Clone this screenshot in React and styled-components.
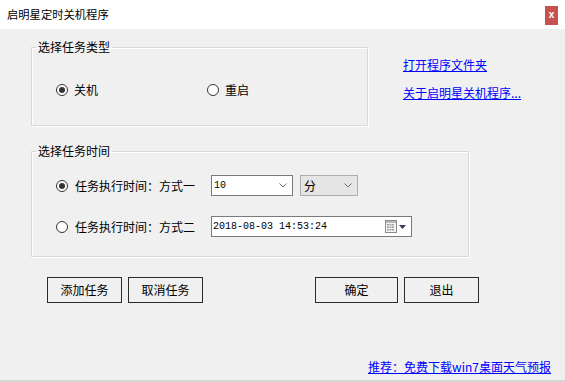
import styled, { createGlobalStyle } from "styled-components";

const GlobalStyle = createGlobalStyle`
  html, body {
    margin: 0;
    padding: 0;
    background: #f0f0f0;
  }
  body {
    font-family: "Noto Sans CJK SC", "Noto Sans", sans-serif;
    font-size: 12px;
    color: #000;
  }
`;

const Window = styled.div`
  width: 565px;
  height: 382px;
  display: flex;
  flex-direction: column;
  background: #f0f0f0;
  overflow: hidden;
`;

const TitleBar = styled.div`
  height: 29px;
  flex-shrink: 0;
  background: #fff;
  display: flex;
  justify-content: space-between;
  padding: 0 7px;
`;

const Title = styled.span`
  font-size: 11.3px;
  line-height: 29px;
  letter-spacing: 0;
`;

const CloseButton = styled.div`
  width: 13px;
  height: 19px;
  margin-top: 6px;
  background: #c75050;
  color: #fff;
  font-family: "Liberation Sans", sans-serif;
  font-weight: bold;
  font-size: 10px;
  line-height: 18px;
  text-align: center;
`;

const Content = styled.div`
  padding-left: 31px;
  display: flex;
  flex-direction: column;
`;

const TopRow = styled.div`
  display: flex;
  margin-top: 10px;
`;

const Group = styled.fieldset`
  width: ${({ $width }) => $width}px;
  box-sizing: border-box;
  margin: ${({ $top }) => $top || 0}px 0 0 0;
  padding: 0;
  border: 1px solid #d9d9d9;
  box-shadow: inset 1px 1px 0 #fff, 1px 1px 0 #fff;
  min-inline-size: 0;
`;

const Legend = styled.legend`
  margin-left: 4px;
  padding: 0 2px;
  line-height: 16px;
  font-size: 12px;
`;

const OptionRow = styled.div`
  display: flex;
  align-items: center;
  height: 16px;
  margin: 27px 0 27px 24px;
`;

const Option = styled.label`
  display: flex;
  align-items: center;
  gap: ${({ $gap }) => $gap || 6}px;
  width: ${({ $width }) => ($width ? `${$width}px` : "auto")};
  line-height: 16px;
  flex-shrink: 0;
`;

const RadioCircle = styled.span`
  width: 12px;
  height: 12px;
  box-sizing: border-box;
  border: 1px solid #333;
  border-radius: 50%;
  background: #fff;
  display: flex;
  align-items: center;
  justify-content: center;
  flex-shrink: 0;

  &::after {
    content: "";
    width: 6px;
    height: 6px;
    border-radius: 50%;
    background: ${({ $checked }) => ($checked ? "#333" : "transparent")};
  }
`;

const Links = styled.div`
  margin-left: 35px;
  padding-top: 18px;
  display: flex;
  flex-direction: column;
  gap: 12px;
`;

const LinkText = styled.a`
  color: #0000ff;
  text-decoration: underline;
  line-height: 16px;
  font-size: 12px;
  cursor: pointer;
  white-space: nowrap;
`;

const TimeRows = styled.div`
  display: flex;
  flex-direction: column;
  gap: 20px;
  padding: 16px 0 19px 24px;
`;

const TimeRow = styled.div`
  display: flex;
  align-items: center;
  height: 21px;
`;

const Combo = styled.div`
  width: ${({ $width }) => $width}px;
  height: 21px;
  box-sizing: border-box;
  margin-right: ${({ $gap }) => $gap || 0}px;
  border: 1px solid ${({ $flat }) => ($flat ? "#adadad" : "#7a7a7a")};
  background: ${({ $flat }) => ($flat ? "#e5e5e5" : "#fff")};
  display: flex;
  align-items: center;
  justify-content: space-between;
  padding: 0 5px 0 ${({ $flat }) => ($flat ? 3 : 2)}px;
  flex-shrink: 0;
`;

const FieldValue = styled.span`
  font-family: ${({ $cjk }) =>
    $cjk ? `"Noto Sans CJK SC", sans-serif` : `"Liberation Mono", monospace`};
  font-size: ${({ $cjk }) => ($cjk ? 12 : 10)}px;
  line-height: 16px;
  white-space: pre;
`;

const DateBox = styled.div`
  width: 201px;
  height: 21px;
  box-sizing: border-box;
  border: 1px solid #7a7a7a;
  background: #fff;
  display: flex;
  align-items: center;
  justify-content: space-between;
  padding: 0 5px 0 1px;
`;

const DateTools = styled.div`
  display: flex;
  align-items: center;
  gap: 2px;
`;

const ButtonRow = styled.div`
  display: flex;
  margin-top: 20px;
  padding-left: 16px;
`;

const Button = styled.button`
  width: ${({ $width }) => $width}px;
  height: 26px;
  margin-left: ${({ $gap }) => $gap || 0}px;
  box-sizing: border-box;
  border: 1px solid #2b2b2b;
  background: #f0f0f0;
  font-family: "Noto Sans CJK SC", sans-serif;
  font-size: 12px;
  color: #000;
  padding: 0;
  line-height: 24px;
`;

const Footer = styled.div`
  margin-top: auto;
  display: flex;
  justify-content: flex-end;
  padding: 0 14px 5px 0;
  border-bottom: 2px solid #d6d6d6;
`;

const Chevron = () => (
  <svg width="8" height="5" viewBox="0 0 8 5">
    <polyline points="0.5,0.5 4,4 7.5,0.5" fill="none" stroke="#6d6d6d" strokeWidth="1" />
  </svg>
);

const CalendarIcon = () => (
  <svg width="12" height="13" viewBox="0 0 12 13">
    <rect x="0.5" y="0.5" width="11" height="12" fill="#f4f4f4" stroke="#8a8a8a" />
    <rect x="1" y="1" width="10" height="2" fill="#b8b8b8" />
    {[4, 6.5, 9].map((y) =>
      [2, 4.5, 7].map((x) => (
        <rect key={`${x}-${y}`} x={x} y={y} width="2" height="1.5" fill="#a0a0a0" />
      ))
    )}
  </svg>
);

const DropArrow = () => (
  <svg width="7" height="4" viewBox="0 0 7 4">
    <polygon points="0,0 7,0 3.5,4" fill="#3a3a5a" />
  </svg>
);

const Radio = ({ checked, label, width, gap }) => (
  <Option $width={width} $gap={gap}>
    <RadioCircle $checked={checked} />
    {label}
  </Option>
);

export default function App() {
  return (
    <Window>
      <GlobalStyle />
      <TitleBar>
        <Title>启明星定时关机程序</Title>
        <CloseButton>x</CloseButton>
      </TitleBar>

      <Content>
        <TopRow>
          <Group $width={337}>
            <Legend>选择任务类型</Legend>
            <OptionRow>
              <Radio checked label="关机" width={151} />
              <Radio label="重启" />
            </OptionRow>
          </Group>
          <Links>
            <LinkText>打开程序文件夹</LinkText>
            <LinkText>关于启明星关机程序...</LinkText>
          </Links>
        </TopRow>

        <Group $width={438} $top={17}>
          <Legend>选择任务时间</Legend>
          <TimeRows>
            <TimeRow>
              <Radio checked label="任务执行时间：方式一" width={155} gap={7} />
              <Combo $width={82} $gap={7}>
                <FieldValue>10</FieldValue>
                <Chevron />
              </Combo>
              <Combo $width={58} $flat>
                <FieldValue $cjk>分</FieldValue>
                <Chevron />
              </Combo>
            </TimeRow>
            <TimeRow>
              <Radio label="任务执行时间：方式二" width={155} gap={7} />
              <DateBox>
                <FieldValue>2018-08-03 14:53:24</FieldValue>
                <DateTools>
                  <CalendarIcon />
                  <DropArrow />
                </DateTools>
              </DateBox>
            </TimeRow>
          </TimeRows>
        </Group>

        <ButtonRow>
          <Button $width={75}>添加任务</Button>
          <Button $width={75} $gap={6}>取消任务</Button>
          <Button $width={83} $gap={112}>确定</Button>
          <Button $width={75} $gap={6}>退出</Button>
        </ButtonRow>
      </Content>

      <Footer>
        <LinkText>推荐：免费下载win7桌面天气预报</LinkText>
      </Footer>
    </Window>
  );
}
